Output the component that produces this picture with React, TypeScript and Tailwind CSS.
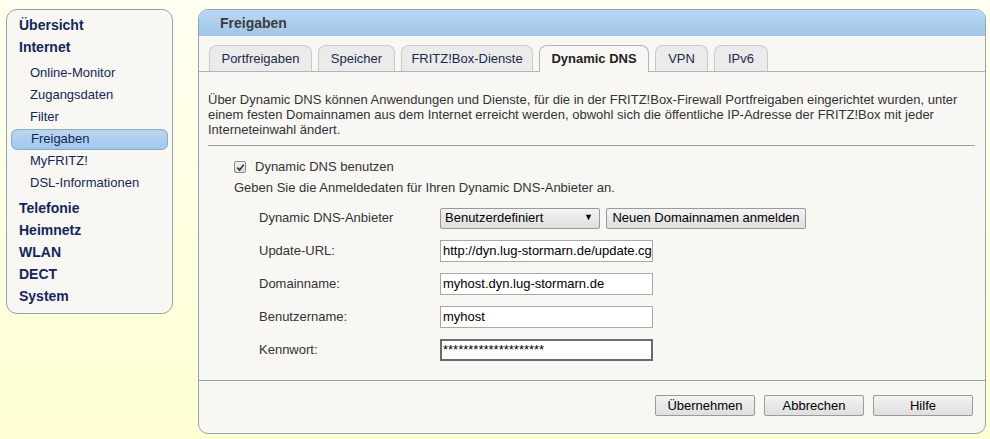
import React from "react";

const font = { fontFamily: '"Liberation Sans", Arial, sans-serif' };

type TNavItem = { label: string; bold?: boolean; active?: boolean; gap?: string };

const navItems: TNavItem[] = [
  { label: "Übersicht", bold: true },
  { label: "Internet", bold: true },
  { label: "Online-Monitor", gap: "mt-[4px]" },
  { label: "Zugangsdaten" },
  { label: "Filter" },
  { label: "Freigaben", active: true },
  { label: "MyFRITZ!" },
  { label: "DSL-Informationen" },
  { label: "Telefonie", bold: true, gap: "mt-[3px]" },
  { label: "Heimnetz", bold: true },
  { label: "WLAN", bold: true },
  { label: "DECT", bold: true },
  { label: "System", bold: true },
];

const tabs = [
  { label: "Portfreigaben", w: "w-[103px]" },
  { label: "Speicher", w: "w-[77px]" },
  { label: "FRITZ!Box-Dienste", w: "w-[132px]" },
  { label: "Dynamic DNS", w: "w-[110px]", active: true },
  { label: "VPN", w: "w-[53px]" },
  { label: "IPv6", w: "w-[54px]" },
];

const Sidebar = () => (
  <div className="w-[167px] h-[305px] shrink-0 rounded-[11px] border border-[#8fa6a8] bg-[#f8f7f3] pt-[4px]">
    {navItems.map((item) => {
      if (item.bold) {
        return (
          <div
            key={item.label}
            className={`h-[22px] flex items-center pl-[12px] text-[14px] font-bold text-[#13265a] ${item.gap ?? ""}`}
          >
            {item.label}
          </div>
        );
      }
      if (item.active) {
        return (
          <div key={item.label} className="h-[22px] flex items-center px-[4px]">
            <div className="w-full h-[21px] flex items-center pl-[19px] rounded-[6px] border border-[#8fa9bf] bg-gradient-to-b from-[#bcd6ee] to-[#9fc8f0] text-[13px] text-[#13265a]">
              {item.label}
            </div>
          </div>
        );
      }
      return (
        <div
          key={item.label}
          className={`h-[22px] flex items-center pl-[23px] text-[13px] text-[#13265a] ${item.gap ?? ""}`}
        >
          {item.label}
        </div>
      );
    })}
  </div>
);

const TextInput = ({ value, focused }: { value: string; focused?: boolean }) => (
  <div
    className={`w-[213px] h-[22px] flex items-center bg-white overflow-hidden whitespace-nowrap text-[13px] text-black ${
      focused ? "border-2 border-[#6b6b6b] pl-[1px]" : "border border-[#a9a9a9] pl-[2px]"
    }`}
  >
    {value}
  </div>
);

const FormRow = ({ label, children }: { label: string; children: React.ReactNode }) => (
  <div className="h-[22px] flex items-center">
    <div className="w-[181px] text-[13px] text-[#333]">{label}</div>
    {children}
  </div>
);

const Button = ({ label, w }: { label: string; w: string }) => (
  <button
    className={`${w} h-[21px] flex items-center justify-center rounded-[2px] border border-[#9a9a9a] bg-gradient-to-b from-[#f4f4f4] to-[#dedede] text-[13px] text-black`}
  >
    {label}
  </button>
);

export default function App() {
  return (
    <div
      style={font}
      className="w-[990px] h-[439px] overflow-hidden flex gap-[25px] pt-[9px] pl-[6px] bg-gradient-to-b from-[#fffef0] to-[#ffffd2]"
    >
      <Sidebar />
      <div className="w-[788px] h-[425px] shrink-0 flex flex-col rounded-[10px] border border-[#8fa6a8] bg-[#f8f7f3] overflow-hidden">
        <div className="h-[26px] shrink-0 flex items-center pl-[21px] bg-gradient-to-b from-[#b8d8f5] to-[#a2c5e7] text-[14px] font-bold text-[#3b3b3b]">
          Freigaben
        </div>
        <div className="h-[36px] shrink-0 flex items-end gap-[6px] pl-[10px] border-b border-[#b4b4b4]">
          {tabs.map((tab) => (
            <div
              key={tab.label}
              className={`${tab.w} flex items-center justify-center rounded-t-[8px] border border-b-0 text-[13px] ${
                tab.active
                  ? "h-[27px] -mb-px bg-[#f8f7f3] border-[#b4b4b4] font-bold text-[#1e1e1e]"
                  : "h-[26px] bg-[#ebebeb] border-[#c9c9c9] text-[#1b2a4e]"
              }`}
            >
              {tab.label}
            </div>
          ))}
        </div>
        <div className="h-[309px] shrink-0 flex flex-col px-[9px] border-b border-[#8fa6a8]">
          <p className="pt-[20px] text-[13px] leading-[15px] text-[#333]">
            Über Dynamic DNS können Anwendungen und Dienste, für die in der FRITZ!Box-Firewall Portfreigaben eingerichtet wurden, unter
            <br />
            einem festen Domainnamen aus dem Internet erreicht werden, obwohl sich die öffentliche IP-Adresse der FRITZ!Box mit jeder
            <br />
            Interneteinwahl ändert.
          </p>
          <div className="mt-[8px] mr-[1px] h-px bg-[#8fa6a8]" />
          <div className="mt-[12px] pl-[26px] flex items-center gap-[9px] h-[18px] text-[13px] text-[#333]">
            <span className="w-[12px] h-[12px] flex items-center justify-center rounded-[2px] border border-[#8a8a8a] bg-gradient-to-b from-[#f2f2f2] to-[#d8d8d8]">
              <svg width="9" height="9" viewBox="0 0 10 10">
                <path d="M1.5 5.2 L4 7.8 L8.6 1.8" fill="none" stroke="#333" strokeWidth="1.8" />
              </svg>
            </span>
            Dynamic DNS benutzen
          </div>
          <div className="mt-[3px] pl-[26px] h-[18px] flex items-center text-[13px] text-[#333]">
            Geben Sie die Anmeldedaten für Ihren Dynamic DNS-Anbieter an.
          </div>
          <div className="mt-[10px] pl-[51px] flex flex-col gap-[11px]">
            <FormRow label="Dynamic DNS-Anbieter">
              <div className="w-[160px] h-[21px] flex items-center justify-between px-[4px] rounded-[2px] border border-[#9a9a9a] bg-gradient-to-b from-[#f4f4f4] to-[#dedede] text-[13px] text-black">
                <span>Benutzerdefiniert</span>
                <span className="text-[9px] pr-[2px]">▼</span>
              </div>
              <div className="ml-[6px]">
                <Button label="Neuen Domainnamen anmelden" w="w-[200px]" />
              </div>
            </FormRow>
            <FormRow label="Update-URL:">
              <TextInput value="http://dyn.lug-stormarn.de/update.cgi" />
            </FormRow>
            <FormRow label="Domainname:">
              <TextInput value="myhost.dyn.lug-stormarn.de" />
            </FormRow>
            <FormRow label="Benutzername:">
              <TextInput value="myhost" />
            </FormRow>
            <FormRow label="Kennwort:">
              <TextInput value="********************" focused />
            </FormRow>
          </div>
        </div>
        <div className="flex justify-end gap-[9px] pt-[14px] pr-[12px]">
          <Button label="Übernehmen" w="w-[100px]" />
          <Button label="Abbrechen" w="w-[100px]" />
          <Button label="Hilfe" w="w-[100px]" />
        </div>
      </div>
    </div>
  );
}
